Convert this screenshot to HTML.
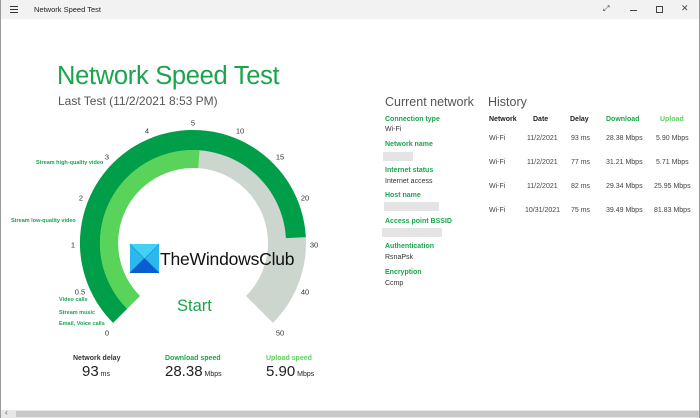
<!DOCTYPE html>
<html><head><meta charset="utf-8"><style>
*{margin:0;padding:0;box-sizing:border-box}
body{width:700px;height:418px;overflow:hidden;background:#fff;font-family:"Liberation Sans",sans-serif;position:relative;color:#222}
.a{position:absolute;white-space:nowrap}
.g{color:#1aa54c}
.lg{color:#5fd05f}
.lab{font-size:7px;font-weight:bold;color:#1aa54c}
.val{font-size:7px;color:#333}
.blur{background:#e4e4e4;height:9px}
.h{font-size:7px;font-weight:bold}
.c{font-size:7px;color:#444}
.tick{font-size:7.5px;color:#333;transform:translate(-50%,-50%)}
.cat{font-size:5.5px;font-weight:bold;color:#1aa54c}
</style></head><body>
<div class="a" style="left:0;top:0;width:700px;height:19px;background:#f2f2f2"></div>
<div class="a" style="left:0;top:0;width:1px;height:418px;background:#999"></div>
<div class="a" style="left:699px;top:0;width:1px;height:418px;background:#999"></div>
<div class="a" style="left:10px;top:6px;width:8px;height:1px;background:#333;box-shadow:0 3px 0 #333,0 6px 0 #333"></div>
<div class="a" style="left:34px;top:5px;font-size:7.5px;color:#222">Network Speed Test</div>
<div class="a" style="left:603px;top:4px;font-size:8px;color:#333">⤢</div>
<div class="a" style="left:630px;top:10px;width:7px;height:1px;background:#444"></div>
<div class="a" style="left:656px;top:6px;width:7px;height:7px;border:1px solid #444"></div>
<div class="a" style="left:681px;top:3px;font-size:9px;color:#444">✕</div>

<div class="a g" style="left:57px;top:62px;font-size:25.5px;letter-spacing:-0.3px">Network Speed Test</div>
<div class="a" style="left:58px;top:94px;font-size:12px;color:#555">Last Test (11/2/2021 8:53 PM)</div>

<svg class="a" style="left:0;top:0" width="700" height="418">
<path d="M113.1 322.9 A113 113 0 1 1 272.9 322.9 L246 296 A75 75 0 1 0 140 296 Z" fill="#cdd5cf"/>
<path d="M113.1 322.9 A113 113 0 1 1 305.8 237.1 L285.9 238.1 A93 93 0 1 0 127.2 308.8 Z" fill="#009e48"/>
<path d="M127.2 308.8 A93 93 0 0 1 199.5 150.2 L198.2 168.2 A75 75 0 0 0 140 296 Z" fill="#5ad35a"/>
<rect x="130" y="244" width="29" height="29" fill="#2bb8ec"/>
<path d="M130 244 L159 273 M159 244 L130 273" stroke="#0f7ad6" stroke-width="1"/>
<path d="M130 273 L144.5 258.5 L159 273Z" fill="#0a5fd0"/>
<path d="M130 244 L144.5 258.5 L159 244Z" fill="#44d1f5"/>
</svg>
<div class="a" style="left:160px;top:249px;font-size:17.5px;color:#111;letter-spacing:-0.2px">TheWindowsClub</div>
<div class="a g" style="left:177px;top:297px;font-size:16.5px">Start</div>

<div class="a tick" style="left:107px;top:333px">0</div>
<div class="a tick" style="left:80px;top:292px">0.5</div>
<div class="a tick" style="left:73px;top:245px">1</div>
<div class="a tick" style="left:81px;top:198px">2</div>
<div class="a tick" style="left:107px;top:157px">3</div>
<div class="a tick" style="left:147px;top:131px">4</div>
<div class="a tick" style="left:193px;top:123px">5</div>
<div class="a tick" style="left:240px;top:131px">10</div>
<div class="a tick" style="left:280px;top:157px">15</div>
<div class="a tick" style="left:305px;top:198px">20</div>
<div class="a tick" style="left:314px;top:245px">30</div>
<div class="a tick" style="left:305px;top:292px">40</div>
<div class="a tick" style="left:280px;top:333px">50</div>

<div class="a cat" style="left:36px;top:160px">Stream high-quality video</div>
<div class="a cat" style="left:11px;top:218px">Stream low-quality video</div>
<div class="a cat" style="left:59px;top:297px">Video calls</div>
<div class="a cat" style="left:59px;top:310px">Stream music</div>
<div class="a cat" style="left:59px;top:321px">Email, Voice calls</div>

<div class="a h" style="left:73px;top:355px;color:#333">Network delay</div>
<div class="a" style="left:82px;top:363px;font-size:15px;color:#222">93<span style="font-size:7px"> ms</span></div>
<div class="a h g" style="left:165px;top:355px">Download speed</div>
<div class="a" style="left:165px;top:363px;font-size:15px;color:#222">28.38<span style="font-size:7px"> Mbps</span></div>
<div class="a h lg" style="left:266px;top:355px">Upload speed</div>
<div class="a" style="left:266px;top:363px;font-size:15px;color:#222">5.90<span style="font-size:7px"> Mbps</span></div>

<div class="a" style="left:385px;top:95px;font-size:12.5px;color:#555">Current network</div>
<div class="a lab" style="left:385px;top:116px">Connection type</div>
<div class="a val" style="left:385px;top:126px">Wi-Fi</div>
<div class="a lab" style="left:385px;top:141px">Network name</div>
<div class="a blur" style="left:383px;top:152px;width:30px"></div>
<div class="a lab" style="left:385px;top:167px">Internet status</div>
<div class="a val" style="left:385px;top:178px">Internet access</div>
<div class="a lab" style="left:385px;top:192px">Host name</div>
<div class="a blur" style="left:384px;top:202px;width:55px"></div>
<div class="a lab" style="left:385px;top:218px">Access point BSSID</div>
<div class="a blur" style="left:382px;top:228px;width:60px"></div>
<div class="a lab" style="left:385px;top:243px">Authentication</div>
<div class="a val" style="left:385px;top:254px">RsnaPsk</div>
<div class="a lab" style="left:385px;top:269px">Encryption</div>
<div class="a val" style="left:385px;top:280px">Ccmp</div>

<div class="a" style="left:488px;top:95px;font-size:12.5px;color:#555">History</div>
<div class="a h" style="left:489px;top:116px">Network</div>
<div class="a h" style="left:533px;top:116px">Date</div>
<div class="a h" style="left:570px;top:116px">Delay</div>
<div class="a h g" style="left:606px;top:116px">Download</div>
<div class="a h lg" style="left:660px;top:116px">Upload</div>

<div class="a c" style="left:489px;top:135px">Wi-Fi</div><div class="a c" style="left:527px;top:135px">11/2/2021</div><div class="a c" style="left:571px;top:135px">93 ms</div><div class="a c" style="left:606px;top:135px">28.38 Mbps</div><div class="a c" style="left:656px;top:135px">5.90 Mbps</div>
<div class="a c" style="left:489px;top:159px">Wi-Fi</div><div class="a c" style="left:527px;top:159px">11/2/2021</div><div class="a c" style="left:571px;top:159px">77 ms</div><div class="a c" style="left:606px;top:159px">31.21 Mbps</div><div class="a c" style="left:656px;top:159px">5.71 Mbps</div>
<div class="a c" style="left:489px;top:183px">Wi-Fi</div><div class="a c" style="left:527px;top:183px">11/2/2021</div><div class="a c" style="left:571px;top:183px">82 ms</div><div class="a c" style="left:606px;top:183px">29.34 Mbps</div><div class="a c" style="left:654px;top:183px">25.95 Mbps</div>
<div class="a c" style="left:489px;top:207px">Wi-Fi</div><div class="a c" style="left:525px;top:207px">10/31/2021</div><div class="a c" style="left:571px;top:207px">75 ms</div><div class="a c" style="left:606px;top:207px">39.49 Mbps</div><div class="a c" style="left:654px;top:207px">81.83 Mbps</div>

<div class="a" style="left:1px;top:410px;width:698px;height:8px;background:#e8e8e8"></div>
<div class="a" style="left:16px;top:411px;width:683px;height:6px;background:#c8c8c8"></div>
<div class="a" style="left:5px;top:408px;font-size:8px;color:#555">‹</div>
</body></html>
